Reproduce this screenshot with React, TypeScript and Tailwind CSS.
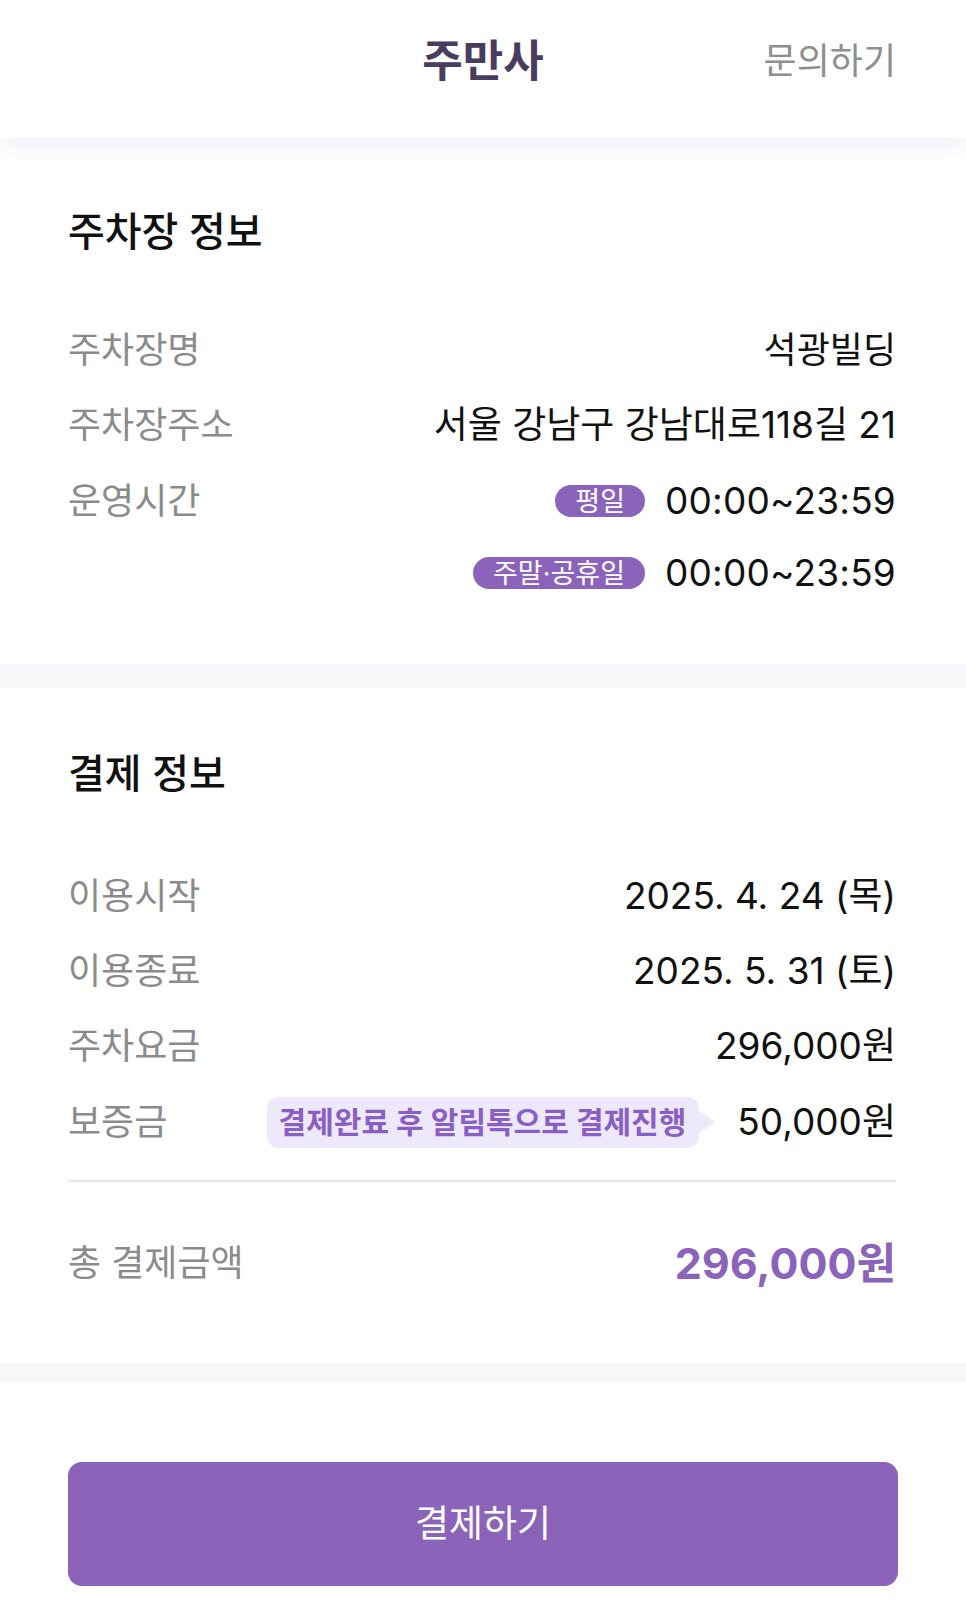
import React from "react";

const FONT = { fontFamily: 'Inter, "Noto Sans CJK KR", sans-serif' };

function Row({ label, children, h }: { label: string; children: React.ReactNode; h: string }) {
  return (
    <div className={`flex items-center justify-between ${h}`}>
      <span className="text-[36px] text-[#8b8b8b]">{label}</span>
      <div className="flex items-center">{children}</div>
    </div>
  );
}

function Badge({ text }: { text: string }) {
  return (
    <span className="mr-[20px] flex h-[32px] items-center rounded-full bg-[#8b63bb] px-[20px] text-[27px] leading-none text-white">
      {text}
    </span>
  );
}

export default function App() {
  return (
    <div style={FONT} className="min-h-[1618px] w-full bg-white text-[#111111]">
      {/* Header */}
      <header className="relative z-10 h-[138px] bg-white shadow-[0_8px_22px_rgba(110,100,150,0.10)]">
        <div className="relative flex h-[122px] items-center justify-center">
          <span className="text-[44px] font-bold text-[#4a3c5f]">주만사</span>
          <span className="absolute right-[70px] text-[36px] text-[#8e8e8e]">문의하기</span>
        </div>
      </header>

      {/* 주차장 정보 */}
      <section className="pb-[57px] pl-[68px] pr-[70px] pt-[70px]">
        <h2 className="h-[48px] text-[40px] font-medium leading-[48px]">주차장 정보</h2>
        <div className="mt-[56px]">
          <Row label="주차장명" h="h-[75px]">
            <span className="text-[36px]">석광빌딩</span>
          </Row>
          <Row label="주차장주소" h="h-[76px]">
            <span className="text-[37px]">서울 강남구 강남대로118길 21</span>
          </Row>
          <Row label="운영시간" h="h-[76px]">
            <Badge text="평일" />
            <span className="text-[37px] tracking-[0.2px]">00:00~23:59</span>
          </Row>
          <div className="flex h-[68px] items-center justify-end">
            <Badge text="주말·공휴일" />
            <span className="text-[37px] tracking-[0.2px]">00:00~23:59</span>
          </div>
        </div>
      </section>

      <div className="h-[24px] bg-[#f7f7f9]" />

      {/* 결제 정보 */}
      <section className="pb-[70px] pl-[68px] pr-[70px] pt-[62px]">
        <h2 className="h-[48px] text-[40px] font-medium leading-[48px]">결제 정보</h2>
        <div className="mt-[60px]">
          <Row label="이용시작" h="h-[75px]">
            <span className="text-[37px]">2025. 4. 24 (목)</span>
          </Row>
          <Row label="이용종료" h="h-[75px]">
            <span className="text-[37px]">2025. 5. 31 (토)</span>
          </Row>
          <Row label="주차요금" h="h-[76px]">
            <span className="text-[37px]">296,000원</span>
          </Row>
          <div className="flex h-[76px] items-center justify-between">
            <span className="text-[36px] text-[#8b8b8b]">보증금</span>
            <div className="flex items-center">
              <div className="relative flex h-[51px] items-center rounded-[12px] bg-[#ede8fa] pl-[12px] pr-[13px]">
                <span className="text-[30px] font-bold text-[#8a5fc4]">결제완료 후 알림톡으로 결제진행</span>
                <span className="absolute right-[-16px] top-1/2 h-0 w-0 -translate-y-1/2 border-y-[12px] border-l-[17px] border-y-transparent border-l-[#ede8fa]" />
              </div>
              <span className="ml-[38px] text-[37px]">50,000원</span>
            </div>
          </div>
        </div>
        <div className="mt-[20px] h-[2px] bg-[#e6e6e8]" />
        <div className="mt-[51px] flex h-[60px] items-center justify-between">
          <span className="text-[36px] text-[#8b8b8b]">총 결제금액</span>
          <span className="text-[43px] font-bold text-[#8b63bb]">296,000원</span>
        </div>
      </section>

      <div className="h-[19px] bg-[#f7f7f9]" />

      <div className="pb-[32px] pl-[68px] pr-[68px] pt-[80px]">
        <button className="flex h-[124px] w-full items-center justify-center rounded-[14px] bg-[#8b63b9] text-[37px] text-white">
          결제하기
        </button>
      </div>
    </div>
  );
}
